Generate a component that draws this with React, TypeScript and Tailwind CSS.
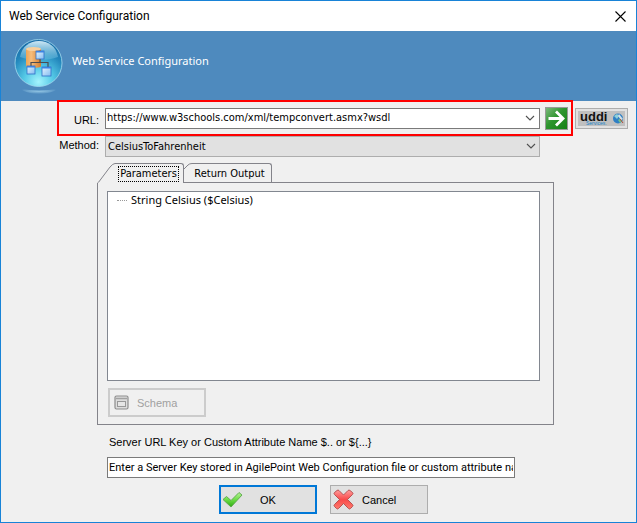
import React, { useState } from 'react';
import clsx from 'clsx';

const uiFont = 'font-["DejaVu_Sans_Condensed","DejaVu_Sans",sans-serif]';
const textFont = 'font-["Noto_Sans",sans-serif]';
const titleFont = 'font-["Roboto",sans-serif]';
const labelFont = 'font-["Liberation_Sans",sans-serif]';

const Chevron = () => (
  <svg className="h-[6px] w-[10px]" viewBox="0 0 10 6" fill="none" stroke="#505050" strokeWidth="1.1">
    <path d="M1 1l4 4 4-4" />
  </svg>
);

const ServiceLogo = () => (
  <svg className="h-[57px] w-[52px] shrink-0" viewBox="0 0 52 57">
    <defs>
      <radialGradient id="orb" cx="50%" cy="90%" r="90%">
        <stop offset="0" stopColor="#a4f4fd" />
        <stop offset="0.35" stopColor="#54c8e6" />
        <stop offset="0.7" stopColor="#2488bd" />
        <stop offset="1" stopColor="#1467a3" />
      </radialGradient>
      <linearGradient id="gloss" x1="0" y1="0" x2="0" y2="1">
        <stop offset="0" stopColor="#e4f6fd" stopOpacity="0.9" />
        <stop offset="1" stopColor="#7ccbe8" stopOpacity="0.3" />
      </linearGradient>
      <linearGradient id="drum" x1="0" y1="0" x2="1" y2="0">
        <stop offset="0" stopColor="#eda556" />
        <stop offset="0.35" stopColor="#f6bd7c" />
        <stop offset="1" stopColor="#d47c2e" />
      </linearGradient>
      <linearGradient id="pane" x1="0" y1="0" x2="1" y2="1">
        <stop offset="0" stopColor="#e6f4ff" />
        <stop offset="1" stopColor="#82bbf0" />
      </linearGradient>
      <radialGradient id="shade">
        <stop offset="0" stopColor="#a8d8ef" stopOpacity="0.8" />
        <stop offset="1" stopColor="#a8d8ef" stopOpacity="0" />
      </radialGradient>
    </defs>
    <path d="M5 49q20 5 40 0-8 6-20 6T5 49z" fill="url(#shade)" />
    <circle cx="24.500" cy="24" r="23.500" fill="url(#orb)" stroke="#a5dcf0" strokeWidth="0.8" />
    <path d="M6 18C8 7 16 2 25 2s17 5 19 16c-10 4-28 4-38 0z" fill="url(#gloss)" />
    <path d="M12 10v17c0 2.500 15 2.500 15 0V10z" fill="url(#drum)" />
    <ellipse cx="19.500" cy="10" rx="7.500" ry="2" fill="#f8cf9d" />
    <path d="M26 20v4M17 28v-4.500h17V30" fill="none" stroke="#4d4c50" strokeWidth="1.2" />
    {[[22, 12, 8], [13, 27, 8], [28, 28, 9]].map(([x, y, size]) => (
      <g key={x}>
        <rect x={x} y={y} width={size} height={size} fill="url(#pane)" stroke="#2d6fc8" strokeWidth="0.8" />
        <rect x={x} y={y} width={size} height="1.500" fill="#3b83e4" />
      </g>
    ))}
  </svg>
);

const GoIcon = () => (
  <svg className="h-full w-full" viewBox="0 0 21 21">
    <defs>
      <linearGradient id="go" x1="0" y1="0" x2="1" y2="1">
        <stop offset="0" stopColor="#7cb87c" />
        <stop offset="0.45" stopColor="#2f952f" />
        <stop offset="1" stopColor="#158015" />
      </linearGradient>
    </defs>
    <rect width="21" height="21" fill="url(#go)" />
    <path d="M2.500 10.500h14M10 3.500l7 7-7 7" fill="none" stroke="#fff" strokeWidth="2.800" />
  </svg>
);

const UddiLogo = () => (
  <svg className="h-[15px] w-[47px] overflow-visible" viewBox="0 0 47 15">
    <rect width="47" height="15" fill="#c0c0c0" />
    <text x="2" y="10" fontFamily="Liberation Sans" fontWeight="bold" fontSize="13" fill="#111">uddi</text>
    <text x="8" y="14" fontFamily="Liberation Sans" fontSize="5" fill="#1682c8">Services.</text>
    <circle cx="40" cy="7.500" r="5" fill="#2f7fc4" />
    <path d="M36 5l3-2 2 2-2 3z" fill="#8fd0d8" />
    <path d="M40 9l3-2 1 3-2 2z" fill="#72c48c" />
    <path d="M41 3l4 5-2 1-3-4z" fill="#d3e0e8" />
    <path d="M42 8l3 4" stroke="#b44a35" strokeWidth="1" />
  </svg>
);

const SchemaIcon = () => (
  <svg className="h-[15px] w-[15px]" viewBox="0 0 15 15" fill="none">
    <rect x="1" y="1" width="13" height="13" rx="1.500" fill="#ddd" stroke="#8e8e8e" strokeWidth="1.2" />
    <path d="M2 3.500h11" stroke="#a2a2a2" strokeWidth="1.5" />
    <rect x="3.500" y="6.500" width="8" height="5" fill="#e6e6e6" stroke="#999" />
  </svg>
);

const CheckIcon = () => (
  <svg className="h-[17px] w-[21px]" viewBox="0 0 21 17">
    <defs>
      <linearGradient id="check" x1="0" y1="0" x2="0" y2="1">
        <stop offset="0" stopColor="#b4f296" />
        <stop offset="0.5" stopColor="#6cdc45" />
        <stop offset="1" stopColor="#2faa12" />
      </linearGradient>
    </defs>
    <path d="M1 8.500l3.500-3 4.500 4L17 1.500l3 2.500L9 16z" fill="url(#check)" stroke="#5aa64a" strokeWidth="0.9" strokeLinejoin="round" />
  </svg>
);

const CrossIcon = () => (
  <svg className="h-[21px] w-[21px]" viewBox="0 0 21 21">
    <defs>
      <linearGradient id="cross" x1="0" y1="0" x2="0" y2="1">
        <stop offset="0" stopColor="#ff9c9c" />
        <stop offset="0.5" stopColor="#f84a4a" />
        <stop offset="1" stopColor="#ff7a6c" />
      </linearGradient>
    </defs>
    <path
      d="M4 1.500q1-1 2 0l4.500 4.500L15 1.500q1-1 2 0l2.500 2q1 1 0 2L14.500 10.500l5 5q1 1 0 2l-2 2q-1 1-2 0l-5-5-5 5q-1 1-2 0l-2-2q-1-1 0-2l5-5-5-5q-1-1 0-2z"
      fill="url(#cross)"
      stroke="#b04a4a"
      strokeWidth="0.9"
      strokeLinejoin="round"
    />
  </svg>
);

const App: React.FC = () => {
  const [tab, setTab] = useState<'parameters' | 'output'>('parameters');
  const [url, setUrl] = useState('https://www.w3schools.com/xml/tempconvert.asmx?wsdl');
  const [serverKey, setServerKey] = useState(
    'Enter a Server Key stored in AgilePoint Web Configuration file or custom attribute name'
  );

  return (
    <div className={clsx('border border-[#1883d7] bg-[#f0f0f0] text-[11px] leading-4 text-black', uiFont)}>
      <header className="flex h-[30px] items-center justify-between bg-white pl-2 pr-2.5">
        <h1 className={clsx('text-[12px]', titleFont)}>Web Service Configuration</h1>
        <button type="button" aria-label="Close">
          <svg className="h-[11px] w-[11px]" viewBox="0 0 11 11" stroke="#000" strokeWidth="1.1">
            <path d="M0.500 0.500l10 10M10.500 0.500l-10 10" />
          </svg>
        </button>
      </header>

      <div className="flex h-[70px] items-start bg-[#4e8abe] pl-[13px] pt-2 text-white">
        <ServiceLogo />
        <p className={clsx('ml-1.5 mt-3.5', textFont)}>Web Service Configuration</p>
      </div>

      <form className="pb-2 pr-2" onSubmit={(e) => e.preventDefault()}>
        <div className="flex">
          <div className="relative -mt-px ml-14 flex h-9 flex-1 items-center border-2 border-[#f00] pr-[3px]">
            <label htmlFor="url" className={clsx('w-10 shrink-0 pt-1 text-right', labelFont)}>URL:</label>
            <div className="ml-1.5 flex h-[21px] min-w-0 flex-1 items-center border border-[#7a7a7a] bg-white pl-px pr-1">
              <input
                id="url"
                className="min-w-0 flex-1 outline-none"
                value={url}
                onChange={(e) => setUrl(e.target.value)}
              />
              <button type="button" aria-label="Show recent addresses"><Chevron /></button>
            </div>
            <button type="button" aria-label="Load service" className="ml-[5px] h-[23px] w-[23px] border border-[#999]">
              <GoIcon />
            </button>
          </div>
          <button
            type="button"
            aria-label="Browse UDDI services"
            className="ml-0.5 mt-[7px] flex h-[21px] w-[53px] items-center justify-center border border-[#adadad] bg-[#e1e1e1]"
          >
            <UddiLogo />
          </button>
        </div>

        <div className="mr-[88px] flex">
          <label htmlFor="method" className={clsx('w-[98px] pt-px text-right', labelFont)}>Method:</label>
          <div className="relative ml-1.5 min-w-0 flex-1">
            <select id="method" className="block h-[21px] w-full appearance-none border border-[#adadad] bg-[#e1e1e1] pl-0.5 outline-none">
              <option>CelsiusToFahrenheit</option>
            </select>
            <span className="pointer-events-none absolute right-1 top-[7px]"><Chevron /></span>
          </div>
        </div>

        <div className="ml-24 mr-[74px] mt-1.5">
          <div role="tablist" className="relative z-10 -mb-px flex h-5">
            <div className="flex bg-[#f0f0f0]">
              <svg className="h-5 w-[18px]" viewBox="0 0 18 20" fill="none" stroke="#83838a">
                <path d="M0.500 20q1-0.500 2-2L13 4q3-3.500 5-3.500" />
              </svg>
              <button
                type="button"
                role="tab"
                aria-selected={tab === 'parameters'}
                onClick={() => setTab('parameters')}
                className="w-[69px] rounded-tr-[3px] border-r border-t border-[#83838a] pl-[3px] pr-1 pt-px"
              >
                <span className={clsx('flex h-4 items-center justify-center border border-dotted', tab === 'parameters' ? 'border-black' : 'border-transparent')}>
                  Parameters
                </span>
              </button>
            </div>
            <div className="flex h-5 border-b border-[#83838a]">
              <svg className="h-5 w-2" viewBox="0 0 8 20" fill="none" stroke="#83838a">
                <path d="M0 6l4-4q1.500-1.500 4-1.500" />
              </svg>
              <button
                type="button"
                role="tab"
                aria-selected={tab === 'output'}
                onClick={() => setTab('output')}
                className="w-[80px] rounded-tr-[3px] border-r border-t border-[#83838a] pr-1 pt-px"
              >
                Return Output
              </button>
            </div>
          </div>

          <div role="tabpanel" className="border border-[#83838a] pb-[7px] pl-[9px] pr-[13px] pt-2">
            <ul className={clsx('h-[190px] border border-[#828790] bg-white pl-[9px]', textFont)}>
              <li className="flex items-center">
                <span className="mr-1 w-2.5 border-t border-dotted border-[#999]" />
                {tab === 'parameters' ? 'String Celsius ($Celsius)' : 'String CelsiusToFahrenheitResult'}
              </li>
            </ul>
            <button
              type="button"
              disabled
              className={clsx('ml-px mt-[7px] flex h-[29px] w-[98px] items-center border-2 border-[#ccc] pl-1 text-[#a0a0a0]', labelFont)}
            >
              <SchemaIcon />
              <span className="ml-2">Schema</span>
            </button>
          </div>
        </div>

        <div className="ml-[106px] mr-[113px] mt-[9px]">
          <label htmlFor="serverKey" className={clsx('ml-0.5 block', labelFont)}>
            Server URL Key or Custom Attribute Name $.. or {'${...}'}
          </label>
          <input
            id="serverKey"
            className={clsx('mt-[7px] block h-[21px] w-full border border-[#7a7a7a] bg-white px-px outline-none', titleFont)}
            value={serverKey}
            onChange={(e) => setServerKey(e.target.value)}
          />
        </div>

        <div className={clsx('ml-[18px] mt-[7px] flex justify-center gap-[13px]', labelFont)}>
          <button type="submit" className="flex h-[29px] w-[98px] items-center border-2 border-[#0078d7] bg-[#e1e1e1] pl-px">
            <CheckIcon />
            <span className="ml-[17px]">OK</span>
          </button>
          <button type="button" className="flex h-[29px] w-[98px] items-center border border-[#adadad] bg-[#e1e1e1] pl-0.5">
            <CrossIcon />
            <span className="ml-2">Cancel</span>
          </button>
        </div>
      </form>
    </div>
  );
};

export default App;
